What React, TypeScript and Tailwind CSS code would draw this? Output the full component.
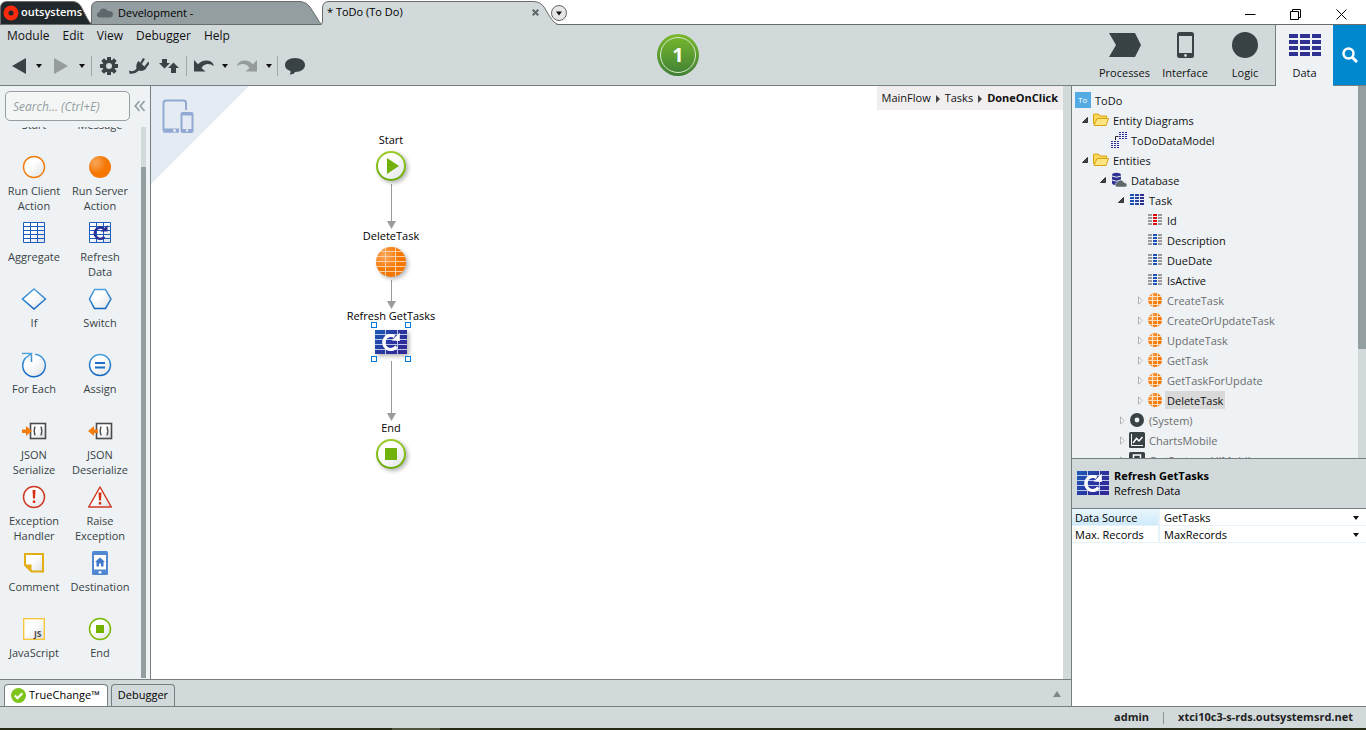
import type { ReactNode } from "react";

/* ---------- shared drawings ---------- */

function Caret({ className = "" }: { className?: string }) {
  return (
    <svg width="6" height="4" viewBox="0 0 6 4" className={className} aria-hidden="true">
      <path d="M0 0h6L3 4z" fill="#111" />
    </svg>
  );
}

function RefreshTile({ width, height }: { width: number; height: number }) {
  return (
    <svg width={width} height={height} viewBox="0 0 32 24" aria-hidden="true">
      <defs>
        <linearGradient id="tileBlue" x1="0" y1="0" x2="1" y2="0.6">
          <stop offset="0" stopColor="#1b5cb8" />
          <stop offset="0.6" stopColor="#2a35a0" />
          <stop offset="1" stopColor="#312a98" />
        </linearGradient>
      </defs>
      <rect width="32" height="24" fill="url(#tileBlue)" />
      <path d="M0 4.5H32M0 9.5H32M0 14.5H32M0 19.5H32M10.5 0V24M22.5 0V24" stroke="#b9c8ea" strokeWidth="1" />
      <path d="M21.5 16.5A7 7 0 1 1 19.5 6.6" fill="none" stroke="#fff" strokeWidth="3.2" />
      <path d="M16.5 10.5L24.8 11V2.8z" fill="#fff" />
    </svg>
  );
}

function GlobeTile({ size, shadow = false }: { size: number; shadow?: boolean }) {
  return (
    <svg
      width={size}
      height={size}
      viewBox="0 0 30 30"
      aria-hidden="true"
      className={shadow ? "drop-shadow-[2px_2px_2px_rgba(0,0,0,0.3)]" : ""}
    >
      <defs>
        <radialGradient id="orangeBall" cx="0.3" cy="0.3" r="0.5">
          <stop offset="0" stopColor="#faa75c" />
          <stop offset="1" stopColor="#f57600" />
        </radialGradient>
        <clipPath id="ballClip">
          <circle cx="15" cy="15" r="15" />
        </clipPath>
      </defs>
      <circle cx="15" cy="15" r="15" fill="url(#orangeBall)" />
      <path
        clipPath="url(#ballClip)"
        d={shadow ? "M0 4.500H30M0 9.500H30M0 14.500H30M0 19.500H30M0 24.500H30M9.500 0V30M19.500 0V30" : "M0 7.500H30M0 16H30M0 24.500H30M9.600 0V30M20.400 0V30"}
        stroke={shadow ? "#fcd0a4" : "#fde3c8"}
        strokeWidth={shadow ? 1 : 2.1}
      />
    </svg>
  );
}

/* ---------- title bar ---------- */

function TitleBar() {
  return (
    <div className="flex h-[25px] shrink-0 border-b border-[#6b6b6b] bg-white">
      <button type="button" className="relative z-10 h-6 w-[91px] text-left">
        <svg width="93" height="25" viewBox="0 0 93 25" className="absolute left-0 top-0" aria-hidden="true">
          <path d="M0.5 24.5V8Q0.5 1.500 7 1.500H72Q78 1.500 81 6.500L87 18Q89 22 92 24.500z" fill="#20282b" stroke="#6b6b6b" />
          <circle cx="11" cy="13" r="5" fill="none" stroke="#f92b0c" strokeWidth="5" />
        </svg>
        <span className="relative block pl-[21px] text-[11px] font-semibold leading-6 text-white">outsystems</span>
      </button>
      <button type="button" className="relative h-6 w-[230px] text-left">
        <svg width="232" height="25" viewBox="0 0 232 25" className="absolute left-0 top-0" aria-hidden="true">
          <path d="M0.500 24.500V8Q0.500 1.500 7 1.500H208Q215 1.500 219 7L226 18Q228 22.500 231 24.500z" fill="#939ea1" stroke="#6b6b6b" />
          <path d="M9 17.500Q6 17.500 6 14.800Q6 12.300 8.500 12Q9 8.500 12.500 8.500Q15.500 8.500 16.800 11Q21 10.500 22 13.800Q22 17.500 19 17.500z" fill="#5c686b" />
        </svg>
        <span className="relative block pl-[27px] text-[11px] leading-[26px] text-black">Development -</span>
      </button>
      <div className="relative z-10 flex h-6 w-[230px] items-center">
        <svg width="237" height="25" viewBox="0 0 237 25" className="absolute left-0 top-0" aria-hidden="true">
          <path d="M0 25Q1.500 24 1.500 21V8Q1.500 1.500 8 1.500H212Q219 1.500 223 7L229 17Q233 24 237 25z" fill="#d2d9db" />
          <path d="M0.500 24Q1.500 23 1.500 21V8Q1.500 1.500 8 1.500H212Q219 1.500 223 7L229 17Q233 23.500 237 24.500" fill="none" stroke="#6b6b6b" />
        </svg>
        <span className="relative flex-1 pl-[6px] text-[11px] leading-[26px] text-black">* ToDo (To Do)</span>
        <button type="button" aria-label="Close tab" className="relative mr-3 mt-px">
          <svg width="7" height="7" viewBox="0 0 7 7" aria-hidden="true">
            <path d="M0.700 0.700L6.300 6.300M6.300 0.700L0.700 6.300" stroke="#606668" strokeWidth="2" />
          </svg>
        </button>
      </div>
      <button type="button" aria-label="Tab list" className="z-10 mt-[5px] size-4">
        <svg width="16" height="16" viewBox="0 0 16 16" aria-hidden="true">
          <circle cx="8" cy="8" r="7.500" fill="#e6e6e6" stroke="#666" />
          <path d="M5 6.500h6L8 10.500z" fill="#111" />
        </svg>
      </button>
      <div className="ml-auto flex items-center pr-[19px] pt-1">
        <button type="button" aria-label="Minimize" className="w-[45px]">
          <svg width="11" height="11" viewBox="0 0 11 11" aria-hidden="true">
            <path d="M0 5.500H10.500" stroke="#000" />
          </svg>
        </button>
        <button type="button" aria-label="Restore" className="w-[46px]">
          <svg width="11" height="11" viewBox="0 0 11 11" fill="none" stroke="#000" aria-hidden="true">
            <path d="M0.500 2.500H8.500V10.500H0.500zM2.500 2.500V0.500H10.500V8.500H8.500" />
          </svg>
        </button>
        <button type="button" aria-label="Close">
          <svg width="11" height="11" viewBox="0 0 11 11" aria-hidden="true">
            <path d="M0.500 0.500L10.500 10.500M10.500 0.500L0.500 10.500" stroke="#000" />
          </svg>
        </button>
      </div>
    </div>
  );
}

/* ---------- header ---------- */

function ToolButton({ label, className, children }: { label: string; className: string; children: ReactNode }) {
  return (
    <button type="button" aria-label={label} className={`flex h-6 shrink-0 items-center justify-center ${className}`}>
      {children}
    </button>
  );
}

function Separator() {
  return <span className="mx-[2px] h-5 w-px shrink-0 bg-[#a0a6a8]" />;
}

const UNDO = "M0 2V13.500H11.500L7.500 10Q8.500 7.200 12 6.200Q16 5.300 20 8Q19 4 15 2.800Q8.500 1.200 4 6.300z";

function Toolbar() {
  return (
    <div className="flex h-10 items-center pl-[7px]">
      <ToolButton label="Back" className="w-6">
        <svg width="14" height="16" viewBox="0 0 14 16"><path d="M14 0V16L0 8z" fill="#394244" /></svg>
      </ToolButton>
      <ToolButton label="Back history" className="w-4"><Caret /></ToolButton>
      <ToolButton label="Forward" className="w-7">
        <svg width="14" height="16" viewBox="0 0 14 16"><path d="M0 0V16L14 8z" fill="#969b9c" /></svg>
      </ToolButton>
      <ToolButton label="Forward history" className="w-[14px]"><Caret /></ToolButton>
      <Separator />
      <ToolButton label="Settings" className="w-[30px]">
        <svg width="18" height="18" viewBox="0 0 18 18">
          <g fill="#394244">
            <rect x="7" y="0" width="4" height="18" />
            <rect x="0" y="7" width="18" height="4" />
            <rect x="7" y="0" width="4" height="18" transform="rotate(45 9 9)" />
            <rect x="0" y="7" width="18" height="4" transform="rotate(45 9 9)" />
            <circle cx="9" cy="9" r="6.500" />
          </g>
          <circle cx="9" cy="9" r="3" fill="#d2d9db" />
        </svg>
      </ToolButton>
      <ToolButton label="Connect" className="w-[30px]">
        <svg width="20" height="18" viewBox="0 0 20 18">
          <path d="M9.500 4L17.500 11.500Q14 15 10 13.500Q6 17.500 0.500 16.500L0 13.500Q5 15.500 7.500 11.500Q6.500 7 9.500 4z" fill="#394244" />
          <path d="M12 6.500L15 1.500M16 10.500L20 5.500" stroke="#394244" strokeWidth="2.200" />
        </svg>
      </ToolButton>
      <ToolButton label="Merge" className="w-[30px]">
        <svg width="20" height="14" viewBox="0 0 20 14">
          <path d="M3 0H8V4H11L5.500 9.500L0 4H3z" fill="#394244" />
          <path d="M14.500 3.500L20 9H17V14H12V9H9z" fill="#394244" />
        </svg>
      </ToolButton>
      <Separator />
      <ToolButton label="Undo" className="w-[30px]">
        <svg width="20" height="16" viewBox="0 0 20 16"><path d={UNDO} fill="#394244" /></svg>
      </ToolButton>
      <ToolButton label="Undo history" className="w-3"><Caret /></ToolButton>
      <ToolButton label="Redo" className="w-8">
        <svg width="20" height="16" viewBox="0 0 20 16"><path d={UNDO} fill="#969b9c" transform="matrix(-1 0 0 1 20 0)" /></svg>
      </ToolButton>
      <ToolButton label="Redo history" className="w-3"><Caret /></ToolButton>
      <Separator />
      <ToolButton label="Feedback" className="w-[30px]">
        <svg width="20" height="17" viewBox="0 0 20 17">
          <path d="M10 0C16 0 20 3 20 7S16 14 10 14Q9 16.500 4.500 16.500Q6 15 5.500 13Q0 11.500 0 7C0 3 4 0 10 0z" fill="#394244" />
        </svg>
      </ToolButton>
    </div>
  );
}

function LayerButton({ label, className, children }: { label: string; className: string; children: ReactNode }) {
  return (
    <button type="button" className={`flex flex-col items-center text-[11px] leading-4 text-[#111] ${className}`}>
      <span className="flex h-10 items-center">{children}</span>
      {label}
    </button>
  );
}

function Header() {
  return (
    <header className="relative flex h-[61px] shrink-0 bg-[#d2d9db]">
      <div className="flex-1 border-b border-[#777e80] pt-px">
        <nav className="flex h-5 items-center gap-[13px] pl-[7px] text-xs text-[#111]">
          {["Module", "Edit", "View", "Debugger", "Help"].map((m) => (
            <button key={m} type="button">{m}</button>
          ))}
        </nav>
        <Toolbar />
      </div>
      <button
        type="button"
        aria-label="Publish"
        className="absolute left-1/2 top-[9px] ml-[-26px] flex size-[42px] items-center justify-center rounded-full bg-linear-to-b from-[#7ab929] to-[#3e8034]"
      >
        <span className="flex size-9 items-center justify-center rounded-full border border-[#d8e8cc] text-xl font-bold text-white">1</span>
      </button>
      <div className="flex border-b border-[#777e80]">
        <LayerButton label="Processes" className="w-[61px]">
          <svg width="32" height="24" viewBox="0 0 32 24"><path d="M0 0H26L32 12L26 24H0L7 12z" fill="#394244" /></svg>
        </LayerButton>
        <LayerButton label="Interface" className="w-[60px]">
          <svg width="17" height="26" viewBox="0 0 17 26">
            <rect width="17" height="26" rx="2.500" fill="#394244" />
            <rect x="2" y="4" width="13" height="17" fill="#d2d9db" />
            <circle cx="8.500" cy="23.500" r="1.400" fill="#d2d9db" />
          </svg>
        </LayerButton>
        <LayerButton label="Logic" className="w-[60px]">
          <svg width="26" height="26" viewBox="0 0 26 26"><circle cx="13" cy="13" r="13" fill="#394244" /></svg>
        </LayerButton>
      </div>
      <LayerButton label="Data" className="w-[58px] border-l border-[#777e80] bg-[#eef2f5]">
        <svg width="32" height="22" viewBox="0 0 32 22">
          {[0, 6, 12, 18].map((y) => (
            <path key={y} d={`M0 ${y}H9V${y + 4}H0zM11 ${y}H21V${y + 4}H11zM23 ${y}H32V${y + 4}H23z`} fill="#2e3192" />
          ))}
        </svg>
      </LayerButton>
      <button
        type="button"
        aria-label="Search"
        className="flex w-[33px] items-center justify-center border-b border-[#777e80] bg-[#0088ce]"
      >
        <svg width="16" height="16" viewBox="0 0 16 16" fill="none" stroke="#fff">
          <circle cx="6.500" cy="6.500" r="5" strokeWidth="2.500" />
          <path d="M10.500 10.500L15 15" strokeWidth="3" />
        </svg>
      </button>
    </header>
  );
}

/* ---------- toolbox ---------- */

function ToolIcon({ children }: { children?: ReactNode }) {
  return (
    <svg width="26" height="26" viewBox="0 0 26 26" fill="none" aria-hidden="true">
      <defs>
        <linearGradient id="paper" x1="0" y1="0" x2="1" y2="1">
          <stop offset="0.400" stopColor="#ffffff" />
          <stop offset="1" stopColor="#dcdfe2" />
        </linearGradient>
        <linearGradient id="blueLine" x1="0" y1="0" x2="0" y2="1">
          <stop offset="0" stopColor="#4fa0dc" />
          <stop offset="1" stopColor="#1266c0" />
        </linearGradient>
      </defs>
      {children}
    </svg>
  );
}

function GridLines() {
  return (
    <path
      d="M2.500 2.500H23.500V22.500H2.500zM2 6.500H24M2 10.500H24M2 14.500H24M2 18.500H24M9.500 3V23M16.500 3V23"
      fill="url(#paper)"
      stroke="#1d5dbb"
    />
  );
}

function Braces({ arrow }: { arrow: string }) {
  return (
    <>
      <rect x="9.500" y="5.500" width="15" height="15" fill="url(#paper)" stroke="#4c4c4c" strokeWidth="1.600" />
      <path
        d="M14.500 9Q13.500 9 13.500 10.500Q13.500 13 12.500 13Q13.500 13 13.500 15.500Q13.500 17 14.500 17M19.500 9Q20.500 9 20.500 10.500Q20.500 13 21.500 13Q20.500 13 20.500 15.500Q20.500 17 19.500 17"
        stroke="#4c4c4c"
        strokeWidth="1.500"
      />
      <path d={arrow} fill="#f57c0a" />
    </>
  );
}

const tools: { label: string; icon: ReactNode }[] = [
  { label: "Start", icon: null },
  { label: "Message", icon: null },
  { label: "Run Client Action", icon: <circle cx="13" cy="13" r="10.500" fill="url(#paper)" stroke="#f07c10" strokeWidth="1.400" /> },
  { label: "Run Server Action", icon: <circle cx="13" cy="13" r="11" fill="url(#orangeBall)" /> },
  { label: "Aggregate", icon: <GridLines /> },
  {
    label: "Refresh Data",
    icon: (
      <>
        <GridLines />
        <path d="M17.500 17A5.600 5.600 0 1 1 16.500 8.500" stroke="#2a2f98" strokeWidth="2.600" />
        <path d="M13.500 11.500H20.500V5z" fill="#2a2f98" />
      </>
    ),
  },
  { label: "If", icon: <path d="M13 3L24.500 13L13 23L1.500 13z" fill="url(#paper)" stroke="url(#blueLine)" strokeWidth="1.500" /> },
  { label: "Switch", icon: <path d="M7.500 3.500H18.500L24 13L18.500 22.500H7.500L2.500 13z" fill="url(#paper)" stroke="url(#blueLine)" strokeWidth="1.500" /> },
  {
    label: "For Each",
    icon: (
      <path
        d="M1 1.500H10.500V10M10 2L5 5.500A11.300 11.300 0 1 0 14 2.200"
        fill="url(#paper)"
        stroke="url(#blueLine)"
        strokeWidth="1.500"
      />
    ),
  },
  {
    label: "Assign",
    icon: (
      <>
        <circle cx="13" cy="13" r="10.500" fill="url(#paper)" stroke="url(#blueLine)" strokeWidth="1.500" />
        <path d="M8 11H18M8 15.500H18" stroke="#1d70c5" strokeWidth="1.800" />
      </>
    ),
  },
  { label: "JSON Serialize", icon: <Braces arrow="M1 11.500H5V8L11 13L5 18V15H1z" /> },
  { label: "JSON Deserialize", icon: <Braces arrow="M11 11.500H7V8L1 13L7 18V15H11z" /> },
  {
    label: "Exception Handler",
    icon: (
      <>
        <circle cx="13" cy="13" r="10.500" fill="url(#paper)" stroke="#cf3a27" strokeWidth="1.500" />
        <path d="M11.500 6H14.500L14 14.500H12zM11.800 16.500H14.200V19H11.800z" fill="#d42f16" />
      </>
    ),
  },
  {
    label: "Raise Exception",
    icon: (
      <>
        <path d="M13 3L24.300 23H1.700z" fill="url(#paper)" stroke="#cf3a27" strokeWidth="1.500" strokeLinejoin="round" />
        <path d="M11.500 8.500H14.500L14 16.500H12zM11.800 18H14.200V20.500H11.800z" fill="#d42f16" />
      </>
    ),
  },
  {
    label: "Comment",
    icon: (
      <>
        <path d="M4 4H22V21.500H10.500L4 15z" fill="url(#paper)" stroke="#e3ad14" strokeWidth="2" />
        <path d="M3.500 14.500H10.500V22z" fill="#e3ad14" />
      </>
    ),
  },
  {
    label: "Destination",
    icon: (
      <>
        <rect x="5" y="1" width="16" height="24" rx="1.500" fill="#5089d2" />
        <rect x="7" y="5" width="12" height="14.500" fill="#fff" />
        <path d="M13 7.500L18 12H16.500V16.500H14V13.500H12V16.500H9.500V12H8z" fill="#3f78c8" />
        <circle cx="13" cy="22.300" r="1.400" fill="#fff" />
      </>
    ),
  },
  {
    label: "JavaScript",
    icon: (
      <>
        <rect x="2.700" y="2.700" width="20.600" height="20.600" fill="url(#paper)" stroke="#f8c73c" strokeWidth="1.400" />
        <text x="13" y="21" fontSize="8.500" fontWeight="700" fill="#4c4c4c">JS</text>
      </>
    ),
  },
  {
    label: "End",
    icon: (
      <>
        <circle cx="13" cy="13" r="10.500" fill="url(#paper)" stroke="#7cb808" strokeWidth="1.500" />
        <rect x="9" y="9" width="8" height="8" fill="#74b300" />
      </>
    ),
  },
];

function Toolbox() {
  return (
    <aside className="flex w-[151px] shrink-0 flex-col border-r border-[#777e80] bg-[#eef2f5]">
      <div className="flex h-[41px] shrink-0 items-start pl-[5px] pt-[5px]">
        <input
          type="text"
          aria-label="Search tools"
          placeholder="Search... (Ctrl+E)"
          className="h-[30px] w-[125px] rounded-[5px] border border-[#939ea1] bg-[#f4f6f5] px-[7px] text-xs italic placeholder:text-[#939ea1]"
        />
        <button type="button" aria-label="Collapse toolbox" className="ml-[4px] mt-[9px]">
          <svg width="11" height="12" viewBox="0 0 11 12" fill="none" stroke="#939ea1" strokeWidth="1.600">
            <path d="M5.500 1L1.200 6L5.500 11M10.500 1L6.200 6L10.500 11" />
          </svg>
        </button>
      </div>
      <div className="flex min-h-0 flex-1">
        <div className="flex min-h-0 w-[141px] flex-col justify-end overflow-hidden">
          <ul className="mb-px grid shrink-0 grid-cols-2 pl-px pr-2">
            {tools.map((t) => (
              <li key={t.label} className="h-[66px]">
                <button
                  type="button"
                  className="flex h-full w-full flex-col items-center pt-1 text-[11px] leading-[15px] text-[#394244]"
                >
                  <ToolIcon>{t.icon}</ToolIcon>
                  <span className="mt-[3px] w-[62px]">{t.label}</span>
                </button>
              </li>
            ))}
          </ul>
        </div>
        <div className="mb-px w-[5px] bg-[#d2d9db] pt-10">
          <div className="h-full bg-[#939ea1]" />
        </div>
      </div>
    </aside>
  );
}

/* ---------- flow canvas ---------- */

function FlowNode({ label, className, children }: { label: string; className: string; children: ReactNode }) {
  return (
    <div className={`absolute left-[180px] flex w-[120px] flex-col items-center text-[11px] leading-4 text-black ${className}`}>
      <span>{label}</span>
      <span className="mt-[3px] flex h-[30px] items-center">{children}</span>
    </div>
  );
}

function GreenCircle({ children }: { children: ReactNode }) {
  return (
    <svg width="30" height="30" viewBox="0 0 30 30" className="drop-shadow-[2px_2px_2px_rgba(0,0,0,0.3)]" aria-hidden="true">
      <defs>
        <linearGradient id="greenRing" x1="0" y1="0" x2="0" y2="1">
          <stop offset="0" stopColor="#9ccc2c" />
          <stop offset="1" stopColor="#69ab00" />
        </linearGradient>
      </defs>
      <circle cx="15" cy="15" r="14" fill="url(#paper)" stroke="url(#greenRing)" strokeWidth="2" />
      {children}
    </svg>
  );
}

function Handle({ className }: { className: string }) {
  return <span className={`absolute size-[6px] border border-[#0078d7] bg-white ${className}`} />;
}

function Canvas() {
  return (
    <main className="relative min-w-0 flex-1 overflow-hidden bg-white">
      <svg width="98" height="98" viewBox="0 0 98 98" className="absolute left-0 top-0" aria-hidden="true">
        <path d="M0 0H98L0 98z" fill="#e4ebf2" />
        <g fill="none" stroke="#92a9d4">
          <path d="M35 24V17Q35 14.500 32.500 14.500H15Q12.500 14.500 12.500 17V43Q12.500 45.500 15 45.500H28" strokeWidth="2" />
          <path d="M12 44.500H28" strokeWidth="4" />
          <rect x="30.500" y="27" width="11" height="19" rx="1.500" strokeWidth="2" />
          <path d="M30 28H42M30 44.500H42" strokeWidth="3" />
        </g>
        <circle cx="23.500" cy="44.500" r="1.500" fill="#e4ebf2" />
        <circle cx="36" cy="44.500" r="1.200" fill="#e4ebf2" />
      </svg>
      <nav
        aria-label="Breadcrumb"
        className="absolute right-0 top-0 flex h-6 items-center gap-[5px] bg-[#f0eeef] px-[5px] pt-px text-[11px] text-[#111]"
      >
        <a href="#mainflow">MainFlow</a>
        <svg width="4" height="8" viewBox="0 0 4 8"><path d="M0 0L4 4L0 8z" fill="#444" /></svg>
        <a href="#tasks">Tasks</a>
        <svg width="4" height="8" viewBox="0 0 4 8"><path d="M0 0L4 4L0 8z" fill="#444" /></svg>
        <a href="#doneonclick" className="font-bold">DoneOnClick</a>
      </nav>
      <svg width="20" height="360" viewBox="0 0 20 360" className="absolute left-[230px] top-0" aria-hidden="true">
        <path d="M10.500 98V136M10.500 194V216M10.500 275V328" stroke="#9a9a9a" />
        <path d="M6 135H15L10.500 143zM6 215H15L10.500 223zM6 327H15L10.500 335z" fill="#9a9a9a" />
      </svg>
      <FlowNode label="Start" className="top-[46px]">
        <GreenCircle><path d="M11 7V23L23 15z" fill="#70b20a" /></GreenCircle>
      </FlowNode>
      <FlowNode label="DeleteTask" className="top-[142px]">
        <GlobeTile size={30} shadow />
      </FlowNode>
      <FlowNode label="Refresh GetTasks" className="top-[222px]">
        <span className="relative flex size-10 shrink-0 items-center justify-center">
          <span className="drop-shadow-[2px_2px_2px_rgba(0,0,0,0.3)]"><RefreshTile width={32} height={24} /></span>
          <Handle className="left-0 top-0" />
          <Handle className="right-0 top-0" />
          <Handle className="bottom-0 left-0" />
          <Handle className="bottom-0 right-0" />
        </span>
      </FlowNode>
      <FlowNode label="End" className="top-[334px]">
        <GreenCircle><rect x="9" y="9" width="12" height="12" fill="#70b20a" /></GreenCircle>
      </FlowNode>
    </main>
  );
}

/* ---------- data tree ---------- */

type IconName = "module" | "folder" | "diagram" | "database" | "entity" | "key" | "attribute" | "action" | "system" | "charts" | "mobile";

function dashes(x: number, width: number, fill: string) {
  return <path d={`M${x} 2h${width}v2h-${width}zM${x} 5h${width}v2h-${width}zM${x} 8h${width}v2h-${width}zM${x} 11h${width}v2h-${width}z`} fill={fill} />;
}

function TreeIcon({ name }: { name: IconName }) {
  if (name === "action") return <GlobeTile size={14} />;
  return (
    <svg width="16" height="16" viewBox="0 0 16 16" aria-hidden="true">
      {name === "module" && (
        <>
          <rect width="16" height="16" fill="#54aae2" />
          <text x="3" y="11" fontSize="8" fill="#fff">To</text>
        </>
      )}
      {name === "folder" && (
        <>
          <path d="M0.500 12V3Q0.500 2 1.500 2H5.500L7 4H13.500V7" fill="#fbd75a" stroke="#d9a010" />
          <path d="M1 13.500L4 6.500H15.500L13 13.500z" fill="#ffe683" stroke="#d9a010" />
        </>
      )}
      {name === "diagram" && (
        <g fill="none">
          <path d="M8 0.500H16M8 2.500H16M8 4.500H16M8 6.500H16M0 9.500H8M0 11.500H8M0 13.500H8M0 15.500H8" stroke="#2e3192" strokeDasharray="2 1" />
          <path d="M4.500 8V4.500H7.500" stroke="#222" />
        </g>
      )}
      {name === "database" && (
        <>
          <path d="M1 3C1 0 10 0 10 3V11C10 14 1 14 1 11z" fill="#2e3192" />
          <path d="M1 4Q5.500 6.500 10 4M1 8Q5.500 10.500 10 8" fill="none" stroke="#eef2f5" />
          <path d="M6.500 15Q4 15 4 12.800Q4 11 6 10.800Q7 8 9.500 8Q12 8 13 10.500Q16 10.800 16 13Q16 15 14 15z" fill="#5c686b" stroke="#eef2f5" strokeWidth="0.500" />
        </>
      )}
      {name === "entity" && <>{dashes(1, 4, "#1c4fb0")}{dashes(6, 4, "#2448a8")}{dashes(11, 4, "#2e3192")}</>}
      {name === "key" && <>{dashes(1, 4, "#9b9b9b")}{dashes(6, 4, "#dc0a0a")}{dashes(11, 4, "#9b9b9b")}</>}
      {name === "attribute" && <>{dashes(1, 4, "#9b9b9b")}{dashes(6, 4, "#1d50b5")}{dashes(11, 4, "#9b9b9b")}</>}
      {name === "system" && <circle cx="8" cy="8" r="4.700" fill="none" stroke="#394244" strokeWidth="4.600" />}
      {name === "charts" && (
        <>
          <rect width="16" height="16" rx="1.500" fill="#394244" />
          <path d="M2.500 2V13.500H14" fill="none" stroke="#fff" />
          <path d="M4 11L7.500 6.500L10 9L13.500 5" fill="none" stroke="#fff" strokeWidth="1.500" />
        </>
      )}
      {name === "mobile" && (
        <>
          <rect width="16" height="16" rx="1.500" fill="#394244" />
          <rect x="4.500" y="3" width="7" height="10" fill="none" stroke="#fff" strokeWidth="1.500" />
        </>
      )}
    </svg>
  );
}

type Row = { label: string; level: number; icon: IconName; arrow?: "open" | "closed"; muted?: boolean; selected?: boolean };

const rows: Row[] = [
  { label: "ToDo", level: 0, icon: "module" },
  { label: "Entity Diagrams", level: 1, icon: "folder", arrow: "open" },
  { label: "ToDoDataModel", level: 2, icon: "diagram" },
  { label: "Entities", level: 1, icon: "folder", arrow: "open" },
  { label: "Database", level: 2, icon: "database", arrow: "open" },
  { label: "Task", level: 3, icon: "entity", arrow: "open" },
  { label: "Id", level: 4, icon: "key" },
  { label: "Description", level: 4, icon: "attribute" },
  { label: "DueDate", level: 4, icon: "attribute" },
  { label: "IsActive", level: 4, icon: "attribute" },
  { label: "CreateTask", level: 4, icon: "action", arrow: "closed", muted: true },
  { label: "CreateOrUpdateTask", level: 4, icon: "action", arrow: "closed", muted: true },
  { label: "UpdateTask", level: 4, icon: "action", arrow: "closed", muted: true },
  { label: "GetTask", level: 4, icon: "action", arrow: "closed", muted: true },
  { label: "GetTaskForUpdate", level: 4, icon: "action", arrow: "closed", muted: true },
  { label: "DeleteTask", level: 4, icon: "action", arrow: "closed", selected: true },
  { label: "(System)", level: 3, icon: "system", arrow: "closed", muted: true },
  { label: "ChartsMobile", level: 3, icon: "charts", arrow: "closed", muted: true },
  { label: "OutSystemsUIMobile", level: 3, icon: "mobile", arrow: "closed", muted: true },
];

const indent = ["pl-[3px]", "pl-[9px]", "pl-[27px]", "pl-[45px]", "pl-[63px]"];

function Tree() {
  return (
    <div className="flex h-[372px] shrink-0 overflow-hidden">
      <ul role="tree" className="min-w-0 flex-1 pt-1">
        {rows.map((r) => (
          <li
            key={r.label}
            role="treeitem"
            aria-selected={!!r.selected}
            className={`flex h-5 items-center text-[11px] ${indent[r.level]} ${r.muted ? "text-[#6d6d6d]" : "text-[#111]"}`}
          >
            {r.level > 0 && (
              <span className="w-3 shrink-0">
                {r.arrow === "open" && (
                  <svg width="8" height="8" viewBox="0 0 8 8"><path d="M6.500 1.500V6.500H1.500z" fill="#444" stroke="#333" /></svg>
                )}
                {r.arrow === "closed" && (
                  <svg width="8" height="9" viewBox="0 0 8 9"><path d="M3.500 0.800V8.200L7 4.500z" fill="#fff" stroke="#b0b0b0" /></svg>
                )}
              </span>
            )}
            <span className="flex w-4 shrink-0 justify-center"><TreeIcon name={r.icon} /></span>
            <span className={`ml-[2px] px-[2px] pt-[2px] leading-4 ${r.selected ? "bg-[#d9d9d9]" : ""}`}>{r.label}</span>
          </li>
        ))}
      </ul>
      <div className="w-2 bg-[#d2d9db]">
        <div className="h-[263px] bg-[#939ea1]" />
      </div>
    </div>
  );
}

/* ---------- properties ---------- */

function Property({ id, label, value, active = false }: { id: string; label: string; value: string; active?: boolean }) {
  return (
    <div className="flex h-[17px] border-b border-[#e6f2fa] text-[11px] leading-4 text-black">
      <label
        htmlFor={id}
        className={`w-[86px] shrink-0 pl-[3px] pt-px ${active ? "bg-linear-to-b from-[#e9f6fd] to-[#cfeafa]" : ""}`}
      >
        {label}
      </label>
      <div className="relative flex-1 border-l-2 border-[#e6f2fa] pt-px">
        <select id={id} className="block h-4 w-full appearance-none bg-transparent pl-1 outline-none">
          <option>{value}</option>
        </select>
        <Caret className="pointer-events-none absolute right-[7px] top-[7px]" />
      </div>
    </div>
  );
}

function SidePanel() {
  return (
    <aside className="flex w-[295px] shrink-0 flex-col border-l border-[#777e80] bg-[#eef2f5]">
      <Tree />
      <div className="flex h-[51px] shrink-0 items-start gap-[5px] border-y border-[#777e80] bg-[#d2d9db] pl-[5px] pt-[9px] text-[11px] leading-[15px] text-black">
        <span className="mt-[3px]"><RefreshTile width={32} height={24} /></span>
        <div>
          <h2 className="font-bold">Refresh GetTasks</h2>
          <p>Refresh Data</p>
        </div>
      </div>
      <div className="min-h-0 flex-1 bg-white">
        <Property id="data-source" label="Data Source" value="GetTasks" active />
        <Property id="max-records" label="Max. Records" value="MaxRecords" />
      </div>
    </aside>
  );
}

/* ---------- bottom ---------- */

function BottomTabs() {
  return (
    <div className="flex h-[27px] shrink-0 items-end gap-[3px] border-t border-[#777e80] bg-[#d2d9db] pl-1 text-[11px] text-black">
      <button type="button" className="flex h-[22px] w-[104px] items-center gap-[3px] rounded-t-[4px] border border-b-0 border-[#777e80] bg-white pl-[6px]">
        <svg width="15" height="15" viewBox="0 0 15 15" aria-hidden="true">
          <circle cx="7.500" cy="7.500" r="7.500" fill="#7fc41c" />
          <path d="M3.800 7.500L6.500 10.200L11.300 5.300" fill="none" stroke="#fff" strokeWidth="2.200" />
        </svg>
        TrueChange™
      </button>
      <button type="button" className="h-[22px] w-16 rounded-t-[4px] border border-b-0 border-[#777e80]">Debugger</button>
      <button type="button" aria-label="Expand panel" className="ml-auto mr-[10px] h-6 self-start pt-1">
        <svg width="8" height="6" viewBox="0 0 8 6"><path d="M4 0L8 6H0z" fill="#808688" /></svg>
      </button>
    </div>
  );
}

function StatusBar() {
  return (
    <footer className="shrink-0">
      <div className="flex h-[22px] items-center justify-end border-t border-[#777e80] bg-[#d2d9db] pr-[13px] text-[11px] font-bold text-[#222]">
        <span>admin</span>
        <span className="mx-[14px] h-3 w-px bg-[#8c9294]" />
        <span>xtci10c3-s-rds.outsystemsrd.net</span>
      </div>
      <div className="h-[2px] bg-[#242a14] pl-[392px]">
        <div className="h-full w-12 bg-[#4d5540]" />
      </div>
    </footer>
  );
}

export default function App() {
  return (
    <div className="flex h-screen flex-col overflow-hidden bg-[#d2d9db] font-['Open_Sans','Noto_Sans',sans-serif]">
      <TitleBar />
      <Header />
      <div className="flex min-h-0 flex-1">
        <div className="flex min-w-0 flex-1 flex-col">
          <div className="flex min-h-0 flex-1">
            <Toolbox />
            <Canvas />
            <div className="w-2 shrink-0 bg-[#d2d9db]" />
          </div>
          <BottomTabs />
        </div>
        <SidePanel />
      </div>
      <StatusBar />
    </div>
  );
}
